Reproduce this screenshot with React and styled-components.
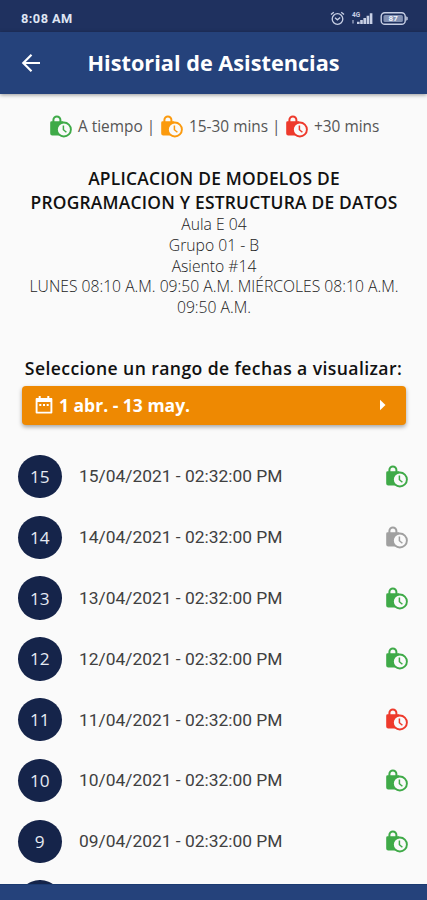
import React from 'react';
import styled, { createGlobalStyle } from 'styled-components';

const GlobalStyle = createGlobalStyle`
    * {
        box-sizing: border-box;
    }
    body {
        margin: 0;
        background-color: #fafafa;
        font-family: "Open Sans", "Noto Sans", sans-serif;
    }
`

const Container = styled.div`
    height: 900px;
    display: flex;
    flex-direction: column;
    overflow: hidden;
    background-color: #fafafa;
`

const StatusBar = styled.div`
    flex: none;
    height: 32px;
    padding: 4px 19px 0 21px;
    display: flex;
    align-items: center;
    justify-content: space-between;
    background-color: #1f315f;
    color: #dfe5f3;
`

const Time = styled.span`
    font-family: Roboto, sans-serif;
    font-size: 12.8px;
    line-height: 16px;
    padding-top: 1px;
    font-weight: 700;
    letter-spacing: 0.45px;
    white-space: nowrap;
`

const StatusIcons = styled.div`
    display: flex;
    align-items: center;
    gap: ${props => props.gap}px;

    svg {
        display: block;
    }
`

const AppBar = styled.header`
    flex: none;
    height: 61.5px;
    padding-left: 20px;
    display: flex;
    align-items: center;
    background-color: #25427b;
    color: white;
    box-shadow: 0 1px 4px rgba(0, 0, 0, 0.4);
    z-index: 1;
`

const BackButton = styled.button`
    width: 22px;
    height: 22px;
    padding: 0;
    border: none;
    background: none;
    color: white;

    svg {
        display: block;
    }
`

const Title = styled.h1`
    margin: 0 0 0 45.5px;
    padding-top: 1px;
    font-size: 21.7px;
    line-height: 30px;
    font-weight: 700;
    white-space: nowrap;
`

const Content = styled.main`
    flex: 1;
    min-height: 0;
    overflow: hidden;
`

const Legend = styled.div`
    margin-top: 20.5px;
    height: 24px;
    padding-left: 50px;
    display: flex;
    align-items: center;
    font-size: 15.4px;
    color: #555;
    white-space: nowrap;
`

const LegendText = styled.span`
    width: ${props => props.width}px;
    padding-left: 6px;
`

const Course = styled.section`
    margin-top: 29px;
    padding-left: 1px;
    text-align: center;
    white-space: nowrap;
`

const CourseName = styled.h2`
    margin: 0;
    font-size: 17.4px;
    line-height: 23.6px;
    font-weight: 600;
    letter-spacing: 0.22px;
    color: #111;
`

const CourseLine = styled.div`
    font-size: 15.7px;
    line-height: 20.7px;
    font-weight: 300;
    color: #222;
`

const RangeLabel = styled.h3`
    margin: 38px 0 0;
    text-align: center;
    font-size: 17.6px;
    line-height: 24px;
    font-weight: 600;
    letter-spacing: 0.4px;
    color: #111;
    white-space: nowrap;
`

const RangeButton = styled.button`
    width: 384px;
    height: 39px;
    margin: 6px 0 0 22px;
    padding: 0 17px 0 12px;
    display: flex;
    align-items: center;
    border: none;
    border-radius: 4px;
    background-color: #ee8902;
    color: white;
    font-family: inherit;
    font-size: 17.5px;
    font-weight: 700;
    box-shadow: 0 2px 4px rgba(0, 0, 0, 0.35);

    svg {
        display: block;
    }
`

const RangeText = styled.span`
    flex: 1;
    padding-left: 5px;
    text-align: left;
`

const List = styled.ul`
    margin: 21.4px 0 0;
    padding: 0;
    list-style: none;
`

const Row = styled.li`
    height: 60.8px;
    padding: 0 19px 0 18px;
    display: flex;
    align-items: center;
`

const Day = styled.div`
    width: 43.5px;
    height: 43.5px;
    border-radius: 50%;
    display: flex;
    align-items: center;
    justify-content: center;
    background-color: #15244a;
    color: #e6eaf2;
    font-size: 17.2px;
    font-weight: 500;
`

const Stamp = styled.span`
    flex: 1;
    padding-left: 17.5px;
    font-family: Roboto, sans-serif;
    font-size: 17.4px;
    color: #404040;
    white-space: nowrap;
`

const BottomBar = styled.div`
    flex: none;
    height: 16px;
    background-color: #25427b;
    border-top: 1px solid #1b3a70;
`

const colors = {
    ontime: '#3faa48',
    late: '#fb9a0e',
    veryLate: '#ee3a2c',
    none: '#a0a0a0',
}

const records = [
    { day: 15, date: '15/04/2021', status: 'ontime' },
    { day: 14, date: '14/04/2021', status: 'none' },
    { day: 13, date: '13/04/2021', status: 'ontime' },
    { day: 12, date: '12/04/2021', status: 'ontime' },
    { day: 11, date: '11/04/2021', status: 'veryLate' },
    { day: 10, date: '10/04/2021', status: 'ontime' },
    { day: 9, date: '09/04/2021', status: 'ontime' },
]

const BagClock = ({ status }) => (
    <svg width="22" height="23" viewBox="0 0 22 23" fill="none">
        <path d="M3.4 8V5a3.5 3.5 0 0 1 7 0v3" stroke={colors[status]} strokeWidth="2" />
        <path d="M1.6 6.3h11.6v14.2H2.2a2 2 0 0 1-2-2V7.7a1.4 1.4 0 0 1 1.4-1.4z" fill={colors[status]} />
        <circle cx="13.9" cy="14.5" r="7" fill="#fafafa" stroke={colors[status]} strokeWidth="1.9" />
        <path d="M13.4 10.6v4.1l3 2.6" stroke={colors[status]} strokeWidth="1.5" />
    </svg>
)

const AlarmIcon = () => (
    <svg width="15" height="15" viewBox="0 0 15 15" fill="none" stroke="#c8d0e5" strokeWidth="1.3">
        <circle cx="7.5" cy="8" r="5.3" />
        <path d="M1 3.6L3.8 1.2M14 3.6L11.2 1.2M5 6.8l2.4 2 2.8-2.2" />
    </svg>
)

const SignalIcon = () => (
    <svg width="23" height="15" viewBox="0 0 23 15" fill="#c8d0e5">
        <text x="1" y="5.8" fontFamily="Roboto" fontSize="6.5" fontWeight="700">4G</text>
        <path d="M1.5 9h1v3.5h-1zM6 10.7h2.6v2.3H6zM9.2 9h2.6v4H9.2zM12.4 7H15v6h-2.6zM15.6 4.7h2.6V13h-2.6zM18.8 2.2h2.6V13h-2.6z" />
    </svg>
)

const BatteryIcon = () => (
    <svg width="28" height="15" viewBox="0 0 28 15" fill="none">
        <rect x="1.2" y="1.7" width="24" height="11.6" rx="3.6" stroke="#c8d0e5" strokeWidth="1.4" />
        <rect x="3.5" y="4" width="19.4" height="7" rx="1.5" fill="#8190b2" />
        <path d="M26.2 5.3l1.5 1v2.4l-1.5 1z" fill="#c8d0e5" />
        <text x="13.2" y="10.4" textAnchor="middle" fontFamily="Roboto" fontSize="8" fontWeight="700" fill="#f1f4fb">87</text>
    </svg>
)

const App = () => {
    return (
        <Container>
            <GlobalStyle />
            <StatusBar>
                <Time>8:08 AM</Time>
                <StatusIcons gap={6}>
                    <AlarmIcon />
                    <SignalIcon />
                    <BatteryIcon />
                </StatusIcons>
            </StatusBar>
            <AppBar>
                <BackButton>
                    <svg width="22" height="22" viewBox="0 0 22 22" fill="none" stroke="white" strokeWidth="2.2">
                        <path d="M20 11H3.5M11.5 2.8L3.3 11l8.2 8.2" />
                    </svg>
                </BackButton>
                <Title>Historial de Asistencias</Title>
            </AppBar>
            <Content>
                <Legend>
                    <BagClock status="ontime" />
                    <LegendText width={89}>A tiempo |</LegendText>
                    <BagClock status="late" />
                    <LegendText width={103}>15-30 mins |</LegendText>
                    <BagClock status="veryLate" />
                    <LegendText width={80}>+30 mins</LegendText>
                </Legend>
                <Course>
                    <CourseName>APLICACION DE MODELOS DE<br />PROGRAMACION Y ESTRUCTURA DE DATOS</CourseName>
                    <CourseLine>Aula E 04</CourseLine>
                    <CourseLine>Grupo 01 - B</CourseLine>
                    <CourseLine>Asiento #14</CourseLine>
                    <CourseLine>LUNES 08:10 A.M. 09:50 A.M. MIÉRCOLES 08:10 A.M.</CourseLine>
                    <CourseLine>09:50 A.M.</CourseLine>
                </Course>
                <RangeLabel>Seleccione un rango de fechas a visualizar:</RangeLabel>
                <RangeButton>
                    <svg width="20" height="20" viewBox="0 0 20 20" fill="none">
                        <path d="M2.6 4h14.8v13.6H2.6z" stroke="white" strokeWidth="1.9" strokeLinejoin="round" />
                        <path d="M2 3h16v4H2zM4.7 1h2v3h-2zM13.3 1h2v3h-2zM5.3 9h2v2h-2zM9 9h2v2H9zM12.7 9h2v2h-2z" fill="white" />
                    </svg>
                    <RangeText>1 abr. - 13 may.</RangeText>
                    <svg width="12" height="12" viewBox="0 0 12 12" fill="white">
                        <path d="M3 .8L8.5 6 3 11.2z" />
                    </svg>
                </RangeButton>
                <List>
                    {records.map((record) => (
                        <Row key={record.day}>
                            <Day>{record.day}</Day>
                            <Stamp>{record.date} - 02:32:00 PM</Stamp>
                            <BagClock status={record.status} />
                        </Row>
                    ))}
                    {/* next record, still below the fold */}
                    <Row>
                        <Day />
                    </Row>
                </List>
            </Content>
            <BottomBar />
        </Container>
    )
}

export default App
